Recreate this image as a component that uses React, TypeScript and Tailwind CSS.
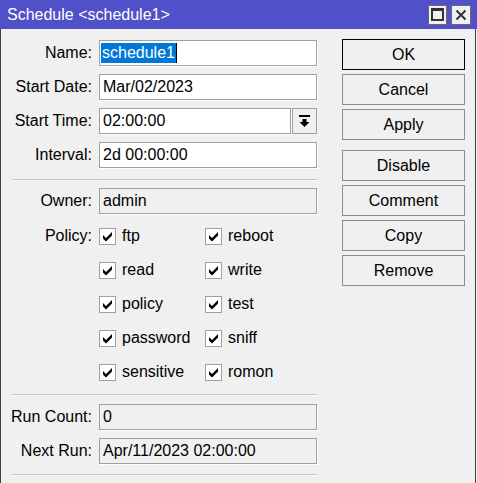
import React from "react";

const FONT = { fontFamily: '"Liberation Sans", Arial, sans-serif' };

function Check() {
  return (
    <span className="flex h-[17px] w-[17px] shrink-0 items-center justify-center border border-[#a0a0a0] bg-white">
      <svg width="11" height="11" viewBox="0 0 11 11">
        <path d="M1 4 L4 7 L10 1 L10 4.5 L4 10.5 L1 7.5 Z" fill="#000" />
      </svg>
    </span>
  );
}

function Field({ value, readOnly, className = "w-[218px]" }: { value: React.ReactNode; readOnly?: boolean; className?: string }) {
  return (
    <div
      className={`flex h-[26px] items-center border border-[#a0a0a0] pl-[3px] shadow-[1px_1px_0_#ffffff] ${
        readOnly ? "bg-[#f0f0f0]" : "bg-white"
      } ${className}`}
    >
      {value}
    </div>
  );
}

function Label({ children }: { children: React.ReactNode }) {
  return <div className="w-[92px] shrink-0 pr-px text-right">{children}</div>;
}

function Row({ label, children }: { label: string; children: React.ReactNode }) {
  return (
    <div className="flex h-[26px] items-center gap-[6px]">
      <Label>{label}</Label>
      {children}
    </div>
  );
}

function Sep() {
  return <div className="ml-[11px] h-[2px] w-[305px] border-t border-[#c4c4c4] bg-[#f8f8f8]" />;
}

const POLICY: [string, string][] = [
  ["ftp", "reboot"],
  ["read", "write"],
  ["policy", "test"],
  ["password", "sniff"],
  ["sensitive", "romon"],
];

function Btn({ children, primary }: { children: string; primary?: boolean }) {
  return (
    <div
      className={`flex h-[31px] w-[123px] items-center justify-center border bg-[#f0f0f0] ${
        primary ? "border-black" : "border-[#8c8c8c]"
      }`}
    >
      {children}
    </div>
  );
}

export default function App() {
  return (
    <div className="h-[483px] w-[477px] overflow-hidden bg-[#f0f0f0] text-[16px] leading-none text-black" style={FONT}>
      {/* title bar */}
      <div className="flex h-[29px] items-center bg-[#5050c8] pl-[7px] pr-[6px]">
        <span className="text-white">Schedule &lt;schedule1&gt;</span>
        <div className="ml-auto flex gap-[4px]">
          <div className="flex h-[20px] w-[19px] items-center justify-center border border-[#6a6a6a] bg-[#f0f0f0]">
            <span className="h-[13px] w-[13px] border-2 border-t-[3px] border-[#333]" />
          </div>
          <div className="flex h-[20px] w-[20px] items-center justify-center border border-[#6a6a6a] bg-[#f0f0f0]">
            <svg width="12" height="12" viewBox="0 0 12 12">
              <path d="M1.5 1.5 L10.5 10.5 M10.5 1.5 L1.5 10.5" stroke="#333" strokeWidth="2" />
            </svg>
          </div>
        </div>
      </div>

      <div className="flex h-[454px] border-l border-r border-l-[#404040] border-r-[#404040] mr-px">
        {/* left form */}
        <div className="flex w-[341px] flex-col pt-[11px]">
          <div className="flex flex-col gap-[8px]">
            <Row label="Name:">
              <Field
                value={
                  <span className="-ml-[2px] flex h-[20px] items-center border-r border-black bg-[#0078d7] px-[1px] text-white">
                    schedule1
                  </span>
                }
              />
            </Row>
            <Row label="Start Date:">
              <Field value="Mar/02/2023" />
            </Row>
            <Row label="Start Time:">
              <div className="flex gap-[1px]">
                <Field value="02:00:00" className="w-[192px]" />
                <div className="flex h-[26px] w-[25px] items-center justify-center border border-[#a0a0a0] bg-[#f0f0f0]">
                  <svg width="11" height="12" viewBox="0 0 11 12">
                    <rect x="0" y="0" width="11" height="2" fill="#000" />
                    <rect x="3.5" y="4" width="4" height="3" fill="#000" />
                    <path d="M0.5 7 L10.5 7 L5.5 12 Z" fill="#000" />
                  </svg>
                </div>
              </div>
            </Row>
            <Row label="Interval:">
              <Field value="2d 00:00:00" />
            </Row>
          </div>

          <div className="mt-[11px]">
            <Sep />
          </div>

          <div className="mt-[7px]">
            <Row label="Owner:">
              <Field value="admin" readOnly />
            </Row>
          </div>

          <div className="mt-[5px] flex flex-col">
            {POLICY.map(([a, b], i) => (
              <div key={a} className="flex h-[34px] items-center gap-[6px]">
                <Label>{i === 0 ? "Policy:" : ""}</Label>
                <div className="flex w-[100px] items-center gap-[6px]">
                  <Check />
                  <span>{a}</span>
                </div>
                <div className="flex items-center gap-[6px]">
                  <Check />
                  <span>{b}</span>
                </div>
              </div>
            ))}
          </div>

          <div className="mt-[5px]">
            <Sep />
          </div>

          <div className="mt-[8px] flex flex-col gap-[8px]">
            <Row label="Run Count:">
              <Field value="0" readOnly />
            </Row>
            <Row label="Next Run:">
              <Field value="Apr/11/2023 02:00:00" readOnly />
            </Row>
          </div>

          <div className="mt-[10px]">
            <Sep />
          </div>
        </div>

        {/* right buttons */}
        <div className="flex flex-col pt-[10px]">
          <div className="flex flex-col gap-[4px]">
            <Btn primary>OK</Btn>
            <Btn>Cancel</Btn>
            <Btn>Apply</Btn>
          </div>
          <div className="mt-[10px] flex flex-col gap-[4px]">
            <Btn>Disable</Btn>
            <Btn>Comment</Btn>
            <Btn>Copy</Btn>
            <Btn>Remove</Btn>
          </div>
        </div>
      </div>
    </div>
  );
}
